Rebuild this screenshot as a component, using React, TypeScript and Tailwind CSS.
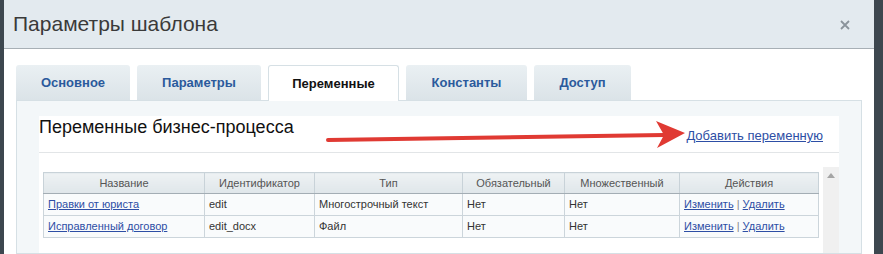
import React from "react"

const tabs = [
    { label: "Основное", w: "w-[114px]" },
    { label: "Параметры", w: "w-[124px]" },
    { label: "Переменные", w: "w-[131px]", active: true },
    { label: "Константы", w: "w-[121px]" },
    { label: "Доступ", w: "w-[97px]" },
]

const rows = [
    { name: "Правки от юриста", id: "edit", type: "Многострочный текст" },
    { name: "Исправленный договор", id: "edit_docx", type: "Файл" },
]

const cols = [
    { title: "Название", w: "w-[161px]" },
    { title: "Идентификатор", w: "w-[110px]" },
    { title: "Тип", w: "w-[148px]" },
    { title: "Обязательный", w: "w-[102px]" },
    { title: "Множественный", w: "w-[115px]" },
    { title: "Действия", w: "w-[139px]" },
]

const App: React.FC = () => {
    return (
        <div className="relative w-[883px] h-[254px] overflow-hidden bg-[#3d474f] font-['Liberation_Sans',Arial,sans-serif]">
            <div className="ml-[4px] w-[870px] h-full bg-white flex flex-col">
                {/* Header */}
                <div className="h-[49px] shrink-0 bg-[#e3eaef] border-b border-[#a7afb5] flex items-center justify-between pl-[9px] pr-[24px]">
                    <h1 className="text-[21px] text-[#3a3a3a] whitespace-nowrap">
                        Параметры шаблона
                    </h1>
                    <svg width="10" height="10" viewBox="0 0 10 10" className="mt-[1px]">
                        <path d="M1 1 L9 9 M9 1 L1 9" stroke="#8a939b" strokeWidth="1.8" />
                    </svg>
                </div>

                {/* Body */}
                <div className="flex-1 px-[12px] pt-[16px] flex flex-col">
                    <div className="flex gap-[7px] h-[35px] relative z-10">
                        {tabs.map((t) => (
                            <div
                                key={t.label}
                                className={
                                    t.active
                                        ? `${t.w} h-[36px] bg-white border border-b-0 border-[#d6e0e5] rounded-t-[3px] flex items-center justify-center text-[13px] font-bold text-[#111]`
                                        : `${t.w} h-[35px] bg-gradient-to-b from-[#eaf0f3] to-[#dbe3e8] rounded-t-[3px] flex items-center justify-center text-[13px] font-bold text-[#2b5a9c]`
                                }
                            >
                                {t.label}
                            </div>
                        ))}
                    </div>

                    <div className="flex-1 bg-[#f3f7f9] border border-[#d6e0e5] pt-[15px] px-[22px]">
                        <div className="bg-white h-full flex flex-col">
                            <div className="h-[37px] shrink-0 border-b border-[#e2e5e7] flex justify-between items-start">
                                <h2 className="text-[18px] leading-[22px] text-[#111]">
                                    Переменные бизнес-процесса
                                </h2>
                                <a href="#" className="text-[13px] text-[#2d4ea5] underline mt-[10px] mr-[16px]">
                                    Добавить переменную
                                </a>
                            </div>

                            <div className="mt-[14px] flex flex-1">
                                <div className="flex-1 pl-[4px] pt-[5px] pr-[4px]">
                                    <table className="border-collapse text-[11px] text-[#333] table-fixed w-[775px]">
                                        <thead>
                                            <tr>
                                                {cols.map((c) => (
                                                    <th
                                                        key={c.title}
                                                        className={`${c.w} h-[21px] p-0 font-normal text-[#555] text-center bg-gradient-to-b from-[#eef2f4] to-[#dfe6ea] border border-[#c8d2d8] border-b-[#a3adb4]`}
                                                    >
                                                        {c.title}
                                                    </th>
                                                ))}
                                            </tr>
                                        </thead>
                                        <tbody>
                                            {rows.map((r) => (
                                                <tr key={r.id} className="bg-[#f9fbfc]">
                                                    <td className="h-[22px] px-[4px] border border-[#ccd5db]">
                                                        <a href="#" className="text-[#2d4ea5] underline">
                                                            {r.name}
                                                        </a>
                                                    </td>
                                                    <td className="px-[4px] border border-[#ccd5db]">{r.id}</td>
                                                    <td className="px-[4px] border border-[#ccd5db]">{r.type}</td>
                                                    <td className="px-[4px] border border-[#ccd5db]">Нет</td>
                                                    <td className="px-[4px] border border-[#ccd5db]">Нет</td>
                                                    <td className="px-[4px] border border-[#ccd5db]">
                                                        <a href="#" className="text-[#2d4ea5] underline">
                                                            Изменить
                                                        </a>{" "}
                                                        <span className="text-[#888]">|</span>{" "}
                                                        <a href="#" className="text-[#2d4ea5] underline">
                                                            Удалить
                                                        </a>
                                                    </td>
                                                </tr>
                                            ))}
                                        </tbody>
                                    </table>
                                </div>
                                {/* Scrollbar */}
                                <div className="w-[17px] bg-[#f0f0f0] flex justify-center pt-[6px]">
                                    <svg width="8" height="5" viewBox="0 0 8 5">
                                        <path d="M0 5 L4 0 L8 5 Z" fill="#a5a5a5" />
                                    </svg>
                                </div>
                            </div>
                        </div>
                    </div>
                </div>
            </div>

            {/* Annotation arrow */}
            <svg className="absolute left-0 top-0 pointer-events-none" width="883" height="254" viewBox="0 0 883 254">
                <path d="M328 140 L664 135" stroke="#e03a33" strokeWidth="4" strokeLinecap="round" />
                <path d="M656 121 L685 133 L657 148 L664 135 Z" fill="#e03a33" />
            </svg>
        </div>
    )
}

export default App
